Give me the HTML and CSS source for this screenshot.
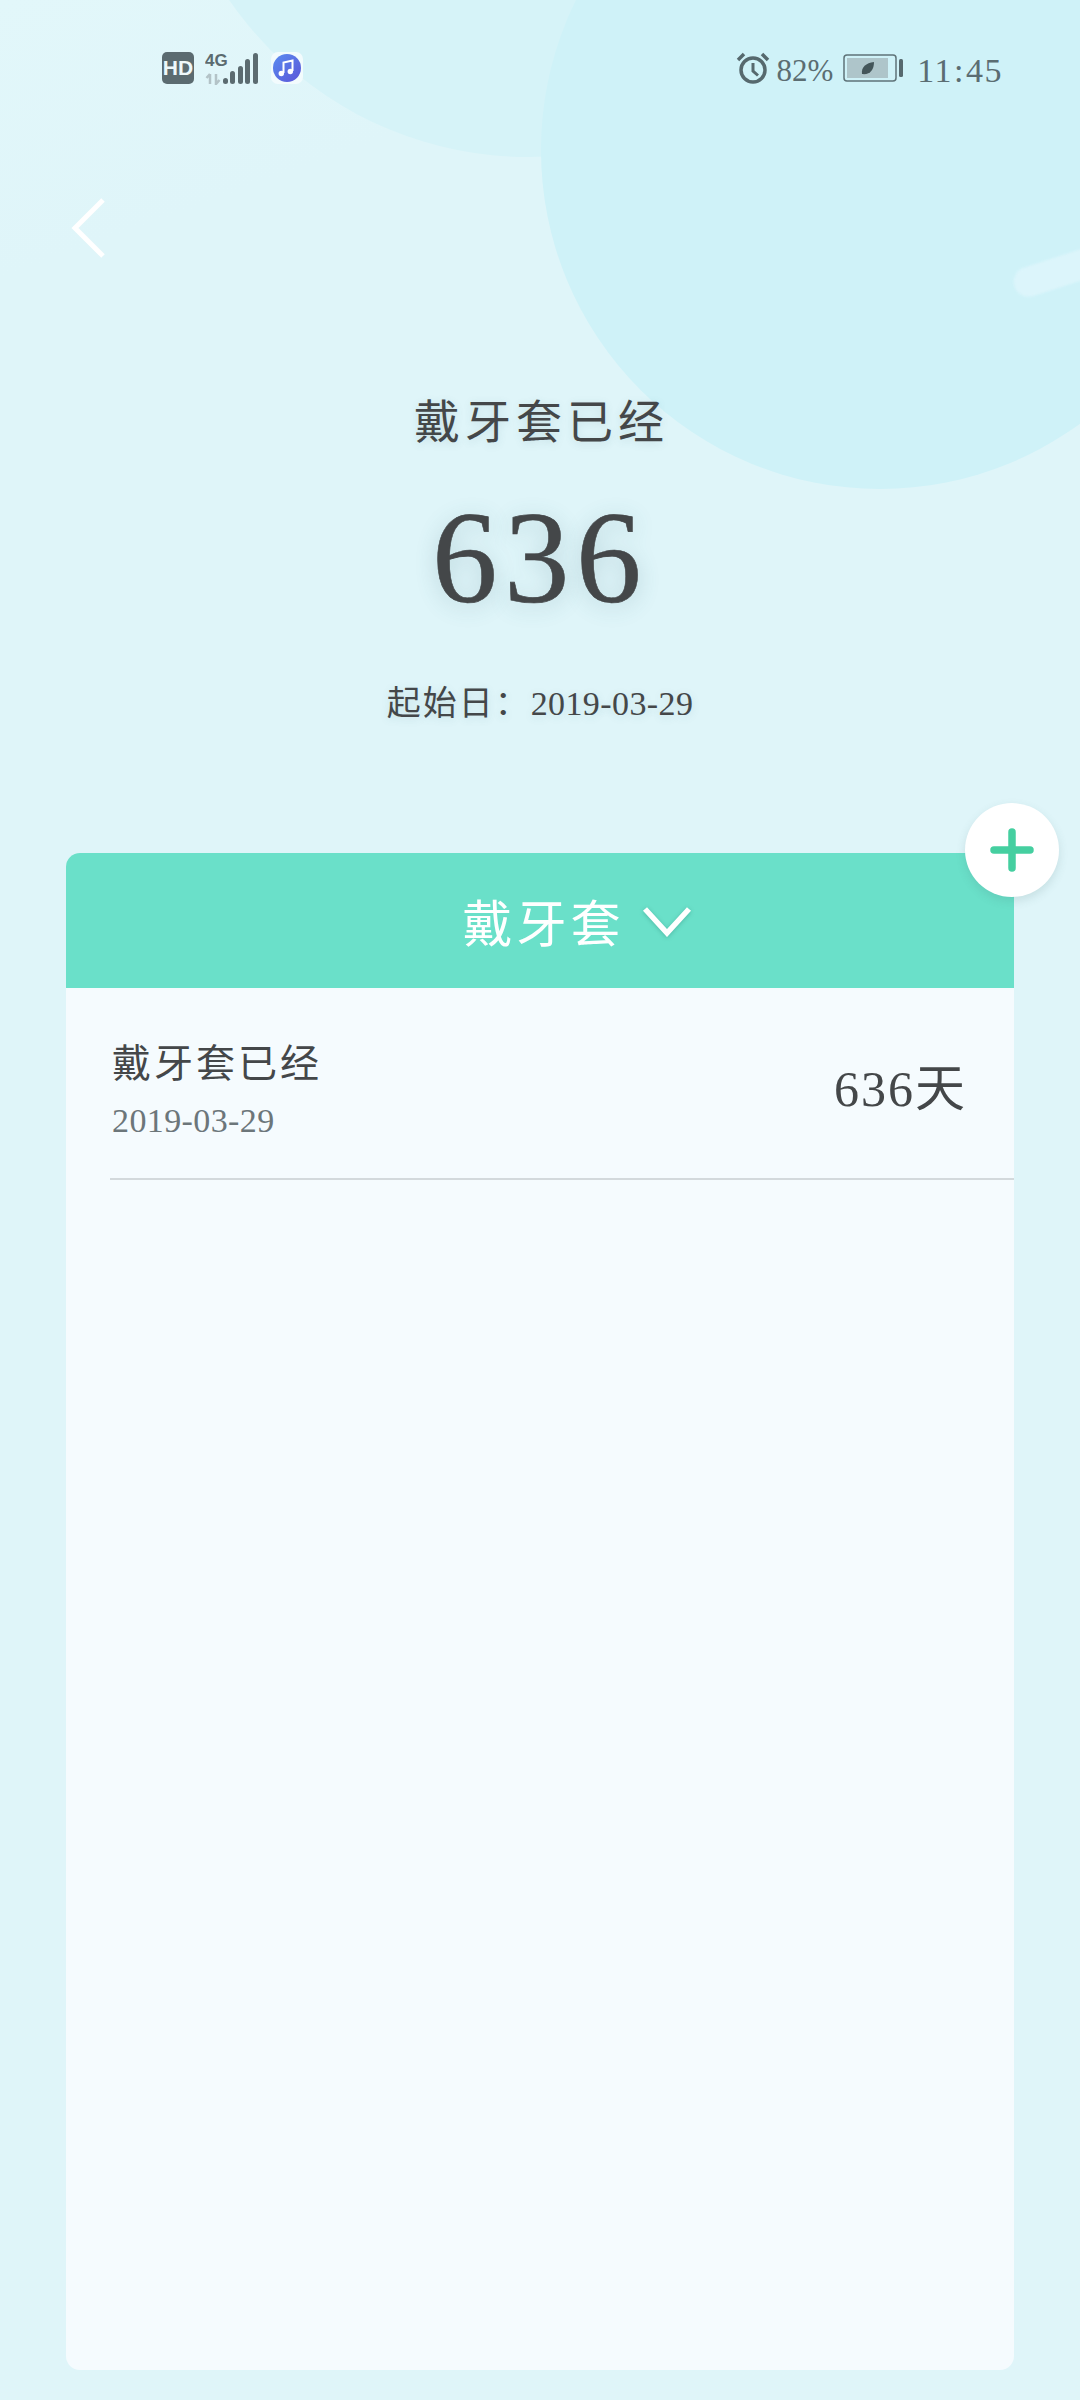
FILE: index.html
```html
<!DOCTYPE html>
<html lang="zh-CN">
<head>
<meta charset="utf-8">
<title>戴牙套已经</title>
<link rel="stylesheet" href="styles.css">
</head>
<body>
<div class="page">
  <div class="bubble bubble-small"></div>
  <div class="bubble bubble-large"></div>
  <div class="bubble-pill"></div>

  <div class="status">
    <div class="status-left">
      <span class="hd">HD</span>
      <span class="net">
        <svg class="net-icon" width="54" height="33" viewBox="0 0 54 33">
          <text class="net-text" x="0" y="14">4G</text>
          <path class="net-arrows" d="M5 32V22M1.500 26l3.500-4M11 22V32l3.500-4"/>
          <g class="net-bars">
            <rect x="18" y="26" width="5" height="6" rx="2.500"/>
            <rect x="25" y="19" width="5" height="13" rx="2.500"/>
            <rect x="33" y="14" width="5" height="18" rx="2.500"/>
            <rect x="40" y="7" width="5" height="25" rx="2.500"/>
            <rect x="48" y="1" width="5" height="31" rx="2.500"/>
          </g>
        </svg>
      </span>
      <svg class="music" width="32" height="32" viewBox="0 0 32 32">
        <defs>
          <linearGradient id="musicFill" x1="0" y1="0" x2="1" y2="1">
            <stop offset="0" stop-color="#5b8cf0"/>
            <stop offset="1" stop-color="#5a55d8"/>
          </linearGradient>
        </defs>
        <rect width="32" height="32" rx="7" fill="#f2fbfd"/>
        <circle cx="16" cy="16" r="14" fill="url(#musicFill)"/>
        <path d="M12.500 21V10.500l9-2V19" fill="none" stroke="#fff" stroke-width="2"/>
        <circle cx="10.300" cy="21.500" r="2.700" fill="#fff"/>
        <circle cx="19.300" cy="19.500" r="2.700" fill="#fff"/>
      </svg>
    </div>
    <div class="status-right">
      <svg class="alarm" width="34" height="34" viewBox="0 0 34 34">
        <circle cx="17" cy="19" r="12" fill="none" stroke="#56696e" stroke-width="3.500"/>
        <path d="M17 12v8l5 4.500" fill="none" stroke="#56696e" stroke-width="3"/>
        <path d="M2 9l6-6M32 9l-6-6" fill="none" stroke="#56696e" stroke-width="3.500"/>
      </svg>
      <span class="pct">82%</span>
      <svg class="battery" width="60" height="28" viewBox="0 0 60 28">
        <rect x="1" y="1" width="52" height="26" rx="3" fill="none" stroke="#5f7378" stroke-width="1.500"/>
        <rect x="4" y="4" width="41" height="20" fill="#aec5ca"/>
        <path d="M19 20c-1-7 4-11 12-12 0 8-4 13-12 12z" fill="#44565a"/>
        <rect x="56" y="5" width="4" height="18" rx="1.500" fill="#56696e"/>
      </svg>
      <span class="clock">11<span class="clock-colon">:</span>45</span>
    </div>
  </div>

  <div class="nav">
    <svg class="back" width="36" height="62" viewBox="0 0 36 62">
      <path d="M32 3L4 31l28 28" fill="none" stroke="#fff" stroke-width="5"/>
    </svg>
  </div>

  <div class="hero">
    <div class="hero-title">戴牙套已经</div>
    <div class="hero-count">636</div>
    <div class="hero-date"><span class="hero-date-label">起始日：</span>2019-03-29</div>
  </div>

  <div class="card">
    <div class="add">
      <svg width="44" height="44" viewBox="0 0 44 44">
        <path d="M22 4v36M4 22h36" stroke="#45cfa0" stroke-width="7.500" stroke-linecap="round"/>
      </svg>
    </div>
    <div class="card-head">
      <span class="card-title">戴牙套</span>
      <svg class="chevron" width="50" height="32" viewBox="0 0 50 32">
        <path d="M3 4l22 24L47 4" fill="none" stroke="#fff" stroke-width="5.500"/>
      </svg>
    </div>
    <div class="row">
      <div class="row-main">
        <div class="row-title">戴牙套已经</div>
        <div class="row-date">2019-03-29</div>
      </div>
      <div class="row-days">636天</div>
    </div>
  </div>
</div>
</body>
</html>
```

FILE: styles.css
```css
* { box-sizing: border-box; }

html, body { margin: 0; padding: 0; }

body {
  font-family: "Liberation Serif", "Noto Sans CJK SC", serif;
  color: #444749;
}

.page {
  position: relative;
  width: 1080px;
  height: 2400px;
  overflow: hidden;
  background: linear-gradient(160deg, #e2f7fa 0, #dff5f9 10%, #dff5f9 100%);
}

.bubble {
  position: absolute;
  border-radius: 50%;
}

.bubble-small {
  left: 165px;
  top: -569px;
  width: 726px;
  height: 726px;
  background: #d6f3f8;
}

.bubble-large {
  left: 541px;
  top: -189px;
  width: 678px;
  height: 678px;
  background: #cff2f8;
}

.bubble-pill {
  position: absolute;
  left: 1012px;
  top: 256px;
  width: 100px;
  height: 30px;
  border-radius: 15px;
  background: #dcf5fb;
  transform: rotate(-18deg);
  filter: blur(1px);
}

.status {
  position: relative;
  display: flex;
  justify-content: space-between;
  align-items: center;
  height: 136px;
  padding: 0 77px 0 162px;
  color: #5b6d72;
}

.status-left, .status-right {
  display: flex;
  align-items: center;
}

.hd {
  display: flex;
  align-items: center;
  justify-content: center;
  width: 32px;
  height: 32px;
  border-radius: 5px;
  background: #5b6b70;
  color: #eef8fa;
  font: 700 21px "Liberation Sans Narrow", sans-serif;
}

.net { display: flex; margin-left: 11px; }

.net-text {
  font: 700 17px "Liberation Sans Narrow", sans-serif;
  fill: #5b6b70;
}

.net-arrows {
  fill: none;
  stroke: #b3c3c7;
  stroke-width: 2.500;
}

.net-bars { fill: #5b6b70; }

.music { margin-left: 12px; }

.alarm { display: block; }

.pct {
  margin-left: 6px;
  padding-top: 5px;
  font-size: 31px;
  line-height: 36px;
}

.battery { margin-left: 10px; }

.clock {
  margin-left: 14px;
  padding-top: 5px;
  font-size: 34px;
  line-height: 36px;
  letter-spacing: 1.500px;
}

.clock-colon { margin: 0 1px; }

.nav {
  position: relative;
  display: flex;
  align-items: center;
  height: 72px;
  margin-top: 56px;
  padding-left: 71px;
}

.back { display: block; }

.hero {
  position: relative;
  display: flex;
  flex-direction: column;
  align-items: center;
  padding-top: 129px;
}

.hero-title {
  height: 60px;
  font-size: 46px;
  line-height: 60px;
  letter-spacing: 5px;
  text-indent: 3px;
  text-shadow: 0 2px 8px rgba(60, 110, 120, 0.15);
}

.hero-count {
  height: 140px;
  margin-top: 35px;
  font-size: 131px;
  line-height: 140px;
  letter-spacing: 6.500px;
  -webkit-text-stroke: 0.6px #444749;
  text-shadow: 0 4px 22px rgba(60, 110, 120, 0.24);
}

.hero-date {
  height: 40px;
  margin-top: 56px;
  font-size: 34px;
  line-height: 40px;
  letter-spacing: 0.400px;
  text-shadow: 0 2px 8px rgba(60, 110, 120, 0.15);
}

.hero-date-label {
  letter-spacing: 2px;
}

.card {
  position: relative;
  width: 948px;
  height: 1517px;
  margin: 129px 0 0 66px;
  border-radius: 14px;
  background: #f5fbfe;
}

.add {
  position: absolute;
  left: 899px;
  top: -50px;
  display: flex;
  align-items: center;
  justify-content: center;
  width: 94px;
  height: 94px;
  border-radius: 50%;
  background: #fff;
  box-shadow: 0 4px 10px rgba(70, 110, 110, 0.16);
}

.card-head {
  display: flex;
  align-items: center;
  justify-content: center;
  gap: 17px;
  height: 135px;
  padding-left: 74px;
  border-radius: 14px 14px 0 0;
  background: #6ae0c9;
}

.card-title {
  padding-top: 8px;
  color: #fff;
  font-size: 50px;
  line-height: 60px;
  letter-spacing: 4px;
}

.chevron {
  display: block;
  filter: drop-shadow(0 1px 2px rgba(40, 130, 115, 0.4));
}

.row {
  display: flex;
  align-items: center;
  justify-content: space-between;
  height: 192px;
  margin-left: 44px;
  padding-right: 47px;
  border-bottom: 2px solid #d3d9dc;
}

.row-main {
  padding: 13px 0 0 2px;
}

.row-title {
  height: 52px;
  font-size: 39px;
  line-height: 52px;
  letter-spacing: 3px;
}

.row-date {
  height: 40px;
  margin-top: 11px;
  color: #6c767a;
  font-size: 34px;
  line-height: 40px;
  letter-spacing: 0.400px;
}

.row-days {
  padding-top: 12px;
  font-size: 50px;
  line-height: 60px;
  letter-spacing: 2px;
}
```
